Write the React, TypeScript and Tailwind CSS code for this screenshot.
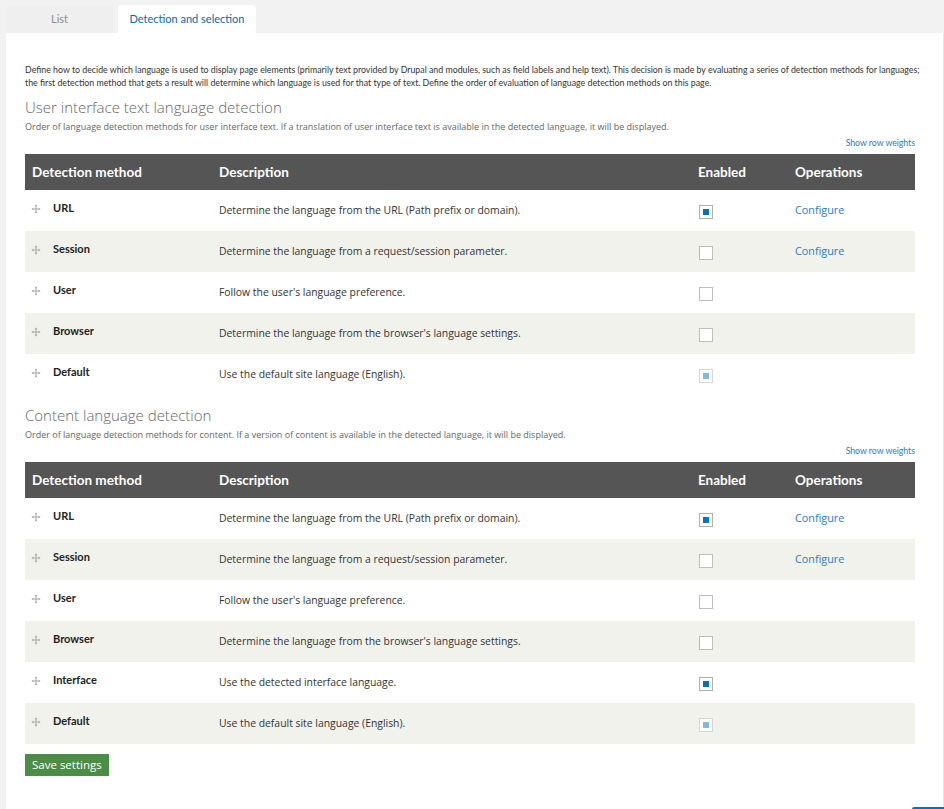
import React from "react";

type Row = { name: string; desc: string; state: "on" | "off" | "locked"; configure?: boolean };

const uiRows: Row[] = [
  { name: "URL", desc: "Determine the language from the URL (Path prefix or domain).", state: "on", configure: true },
  { name: "Session", desc: "Determine the language from a request/session parameter.", state: "off", configure: true },
  { name: "User", desc: "Follow the user's language preference.", state: "off" },
  { name: "Browser", desc: "Determine the language from the browser's language settings.", state: "off" },
  { name: "Default", desc: "Use the default site language (English).", state: "locked" },
];

const contentRows: Row[] = [
  { name: "URL", desc: "Determine the language from the URL (Path prefix or domain).", state: "on", configure: true },
  { name: "Session", desc: "Determine the language from a request/session parameter.", state: "off", configure: true },
  { name: "User", desc: "Follow the user's language preference.", state: "off" },
  { name: "Browser", desc: "Determine the language from the browser's language settings.", state: "off" },
  { name: "Interface", desc: "Use the detected interface language.", state: "on" },
  { name: "Default", desc: "Use the default site language (English).", state: "locked" },
];

function DragHandle() {
  return (
    <svg width="10" height="10" viewBox="0 0 10 10" className="shrink-0">
      <path d="M5 0.5 L6.6 2.3 H5.5 V4.5 H7.7 V3.4 L9.5 5 L7.7 6.6 V5.5 H5.5 V7.7 H6.6 L5 9.5 L3.4 7.7 H4.5 V5.5 H2.3 V6.6 L0.5 5 L2.3 3.4 V4.5 H4.5 V2.3 H3.4 Z" fill="#a8a8a8" />
    </svg>
  );
}

function Check({ state }: { state: Row["state"] }) {
  if (state === "off") {
    return <span className="block w-[14px] h-[14px] border border-[#bdbdbd] bg-white" />;
  }
  if (state === "locked") {
    return (
      <span className="flex items-center justify-center w-[14px] h-[14px] border border-[#d6d6d6] bg-white">
        <span className="w-[6px] h-[6px] bg-[#80b9e0]" />
      </span>
    );
  }
  return (
    <span className="flex items-center justify-center w-[14px] h-[14px] border border-[#b0b0b0] bg-white">
      <span className="w-[6px] h-[6px] bg-[#0074bd]" />
    </span>
  );
}

function MethodTable({ rows }: { rows: Row[] }) {
  return (
    <table className="w-[890px] border-collapse table-fixed">
      <colgroup>
        <col className="w-[187px]" />
        <col className="w-[479px]" />
        <col className="w-[97px]" />
        <col className="w-[127px]" />
      </colgroup>
      <thead>
        <tr className="bg-[#555555] h-[36px] text-white text-[13.5px] font-bold font-['Lato',sans-serif] text-left">
          <th className="pl-[7px] font-bold">Detection method</th>
          <th className="pl-[7px] font-bold">Description</th>
          <th className="pl-[7px] font-bold">Enabled</th>
          <th className="pl-[7px] font-bold">Operations</th>
        </tr>
      </thead>
      <tbody>
        {rows.map((r, i) => (
          <tr key={r.name} className={`h-[41px] ${i % 2 === 1 ? "bg-[#f2f2ed]" : "bg-white"}`}>
            <td className="pl-[6px] align-middle">
              <div className="flex items-center gap-[12px] -mt-[4px]">
                <DragHandle />
                <span className="text-[11px] font-bold text-[#222] font-['Lato',sans-serif]">{r.name}</span>
              </div>
            </td>
            <td className="pl-[7px] text-[10.4px] text-[#333] font-['Open_Sans',sans-serif]">{r.desc}</td>
            <td className="pl-[8px]">
              <div className="pt-[2px]"><Check state={r.state} /></div>
            </td>
            <td className="pl-[7px] text-[10.8px] text-[#2b7bc0] font-['Open_Sans',sans-serif]">
              {r.configure ? "Configure" : ""}
            </td>
          </tr>
        ))}
      </tbody>
    </table>
  );
}

function Section({ title, desc, rows }: { title: string; desc: string; rows: Row[] }) {
  return (
    <div className="flex flex-col">
      <h2 className="text-[15px] leading-[20px] font-light text-[#666] font-['Open_Sans',sans-serif]">{title}</h2>
      <p className="mt-[4px] text-[9px] leading-[12px] text-[#666] font-['Open_Sans',sans-serif]">{desc}</p>
      <div className="w-[890px] flex justify-end mt-[4px] mb-[5px]">
        <span className="text-[8.7px] leading-[12px] text-[#2b7bc0] font-['Lato',sans-serif]">Show row weights</span>
      </div>
      <MethodTable rows={rows} />
    </div>
  );
}

export default function App() {
  return (
    <div className="w-[944px] h-[809px] bg-[#f2f2f2] pl-[6px] flex flex-col overflow-hidden relative">
      <div className="flex items-end gap-[5px] h-[33px]">
        <div className="w-[107px] h-[28px] bg-[#efefef] rounded-t-[4px] flex items-center justify-center text-[11px] text-[#8d8d8d] font-['Lato',sans-serif]">
          List
        </div>
        <div className="w-[138px] h-[29px] bg-white rounded-t-[4px] flex items-center justify-center text-[11px] text-[#0b69a8] font-['Lato',sans-serif] -mb-[1px] relative">
          Detection and selection
        </div>
      </div>
      <div className="flex-1 bg-white pl-[19px] pt-[30px] border-r border-[#e6e6e6]">
        <p className="w-[906px] text-[8.8px] leading-[13px] text-[#333] font-['Lato',sans-serif]">
          Define how to decide which language is used to display page elements (primarily text provided by Drupal and modules, such as field labels and help text). This decision is made by evaluating a series of detection methods for languages; the first detection method that gets a result will determine which language is used for that type of text. Define the order of evaluation of language detection methods on this page.
        </p>
        <div className="mt-[8px]">
          <Section
            title="User interface text language detection"
            desc="Order of language detection methods for user interface text. If a translation of user interface text is available in the detected language, it will be displayed."
            rows={uiRows}
          />
        </div>
        <div className="mt-[10px]">
          <Section
            title="Content language detection"
            desc="Order of language detection methods for content. If a version of content is available in the detected language, it will be displayed."
            rows={contentRows}
          />
        </div>
        <button className="mt-[10px] h-[22px] px-[7px] bg-[#4a8e46] text-white text-[11.5px] font-['Open_Sans',sans-serif]">
          Save settings
        </button>
      </div>
      <div className="absolute right-0 bottom-0 w-[32px] h-[2px] bg-[#0074bd] rounded-tl-[2px]" />
    </div>
  );
}
